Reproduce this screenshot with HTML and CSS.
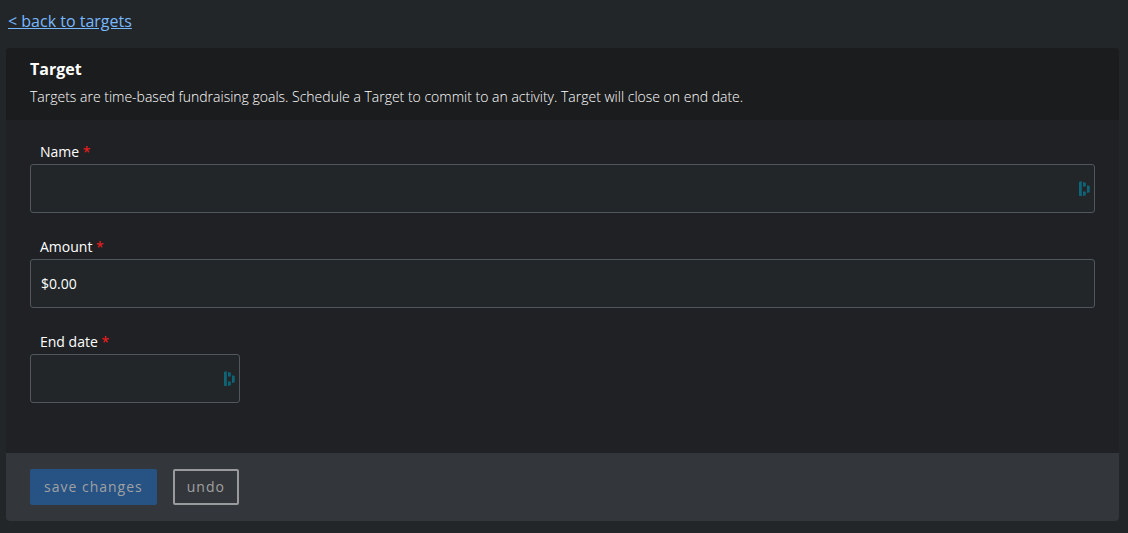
FILE: index.html
```html
<!DOCTYPE html>
<html lang="en">
<head>
<meta charset="utf-8">
<title>Target</title>
<link rel="stylesheet" href="styles.css">
</head>
<body>
<a class="back" href="#">&lt; back to targets</a>
<form class="card">
  <header class="card-head">
    <h1 class="title">Target</h1>
    <p class="intro">Targets are time-based fundraising goals. Schedule a Target to commit to an activity. Target will close on end date.</p>
  </header>
  <div class="fields">
    <div class="field">
      <label class="label" for="name">Name <span class="required">*</span></label>
      <div class="control">
        <input class="input" id="name" type="text">
        <svg class="fill-icon" viewBox="0 0 12 16" aria-hidden="true"><path d="M1 .7L3.8.3v15L1 14.8zM5 1l2.8.7V5.5H5zM5 10.5h2.8v3.8L5 15zM9 4.3l2.7.7v6.2l-2.7.7z"/></svg>
      </div>
    </div>
    <div class="field">
      <label class="label" for="amount">Amount <span class="required">*</span></label>
      <div class="control">
        <input class="input" id="amount" type="text" value="$0.00">
      </div>
    </div>
    <div class="field field-date">
      <label class="label" for="end">End date <span class="required">*</span></label>
      <div class="control">
        <input class="input" id="end" type="text">
        <svg class="fill-icon" viewBox="0 0 12 16" aria-hidden="true"><path d="M1 .7L3.8.3v15L1 14.8zM5 1l2.8.7V5.5H5zM5 10.5h2.8v3.8L5 15zM9 4.3l2.7.7v6.2l-2.7.7z"/></svg>
      </div>
    </div>
  </div>
  <footer class="actions">
    <button class="button save" type="submit">save changes</button>
    <button class="button undo" type="reset">undo</button>
  </footer>
</form>
</body>
</html>
```
FILE: styles.css
```css
* { box-sizing: border-box; }
body {
  margin: 0;
  padding: 9px 9px 12px 6px;
  background: #222628;
  color: #fff;
  font: 14px/20px "Open Sans", sans-serif;
}
.back {
  display: block;
  width: fit-content;
  margin: 0 2px 15px;
  color: #78b8ff;
  font-size: 16px;
  line-height: 24px;
}
.card {
  border-radius: 4px;
  overflow: hidden;
  background: #202124;
}
.card-head {
  padding: 8px 24px 12px;
  background: #1b1c1d;
}
.title { margin: 0 0 4px; font-size: 16px; line-height: 26px; font-weight: 700; }
.intro { margin: 0; font-weight: 300; line-height: 22px; }
.fields {
  display: grid;
  gap: 24px;
  padding: 22px 24px 50px;
}
.field { display: grid; gap: 2px; }
.field-date { width: 210px; }
.label { padding-left: 10px; }
.required { color: #ff1c1c; }
.control { position: relative; }
.input {
  display: block;
  width: 100%;
  height: 49px;
  padding: 0 10px;
  border: 1px solid #50585e;
  border-radius: 3px;
  background: #222628;
  color: #fff;
  font: inherit;
}
.fill-icon {
  position: absolute;
  top: 17px;
  right: 5px;
  width: 12px;
  height: 16px;
  fill: #0e6577;
}
.actions {
  display: flex;
  gap: 16px;
  padding: 16px 24px;
  background: #33363a;
}
.button {
  height: 36px;
  padding: 0 12px;
  border: 2px solid;
  border-radius: 2px;
  font: 500 14px/20px "Open Sans", sans-serif;
  letter-spacing: 1px;
}
.save { border-color: #265284; background: #265284; color: #a0a1a3; }
.undo { border-color: #999a9c; background: transparent; color: #a0a1a3; }
```
